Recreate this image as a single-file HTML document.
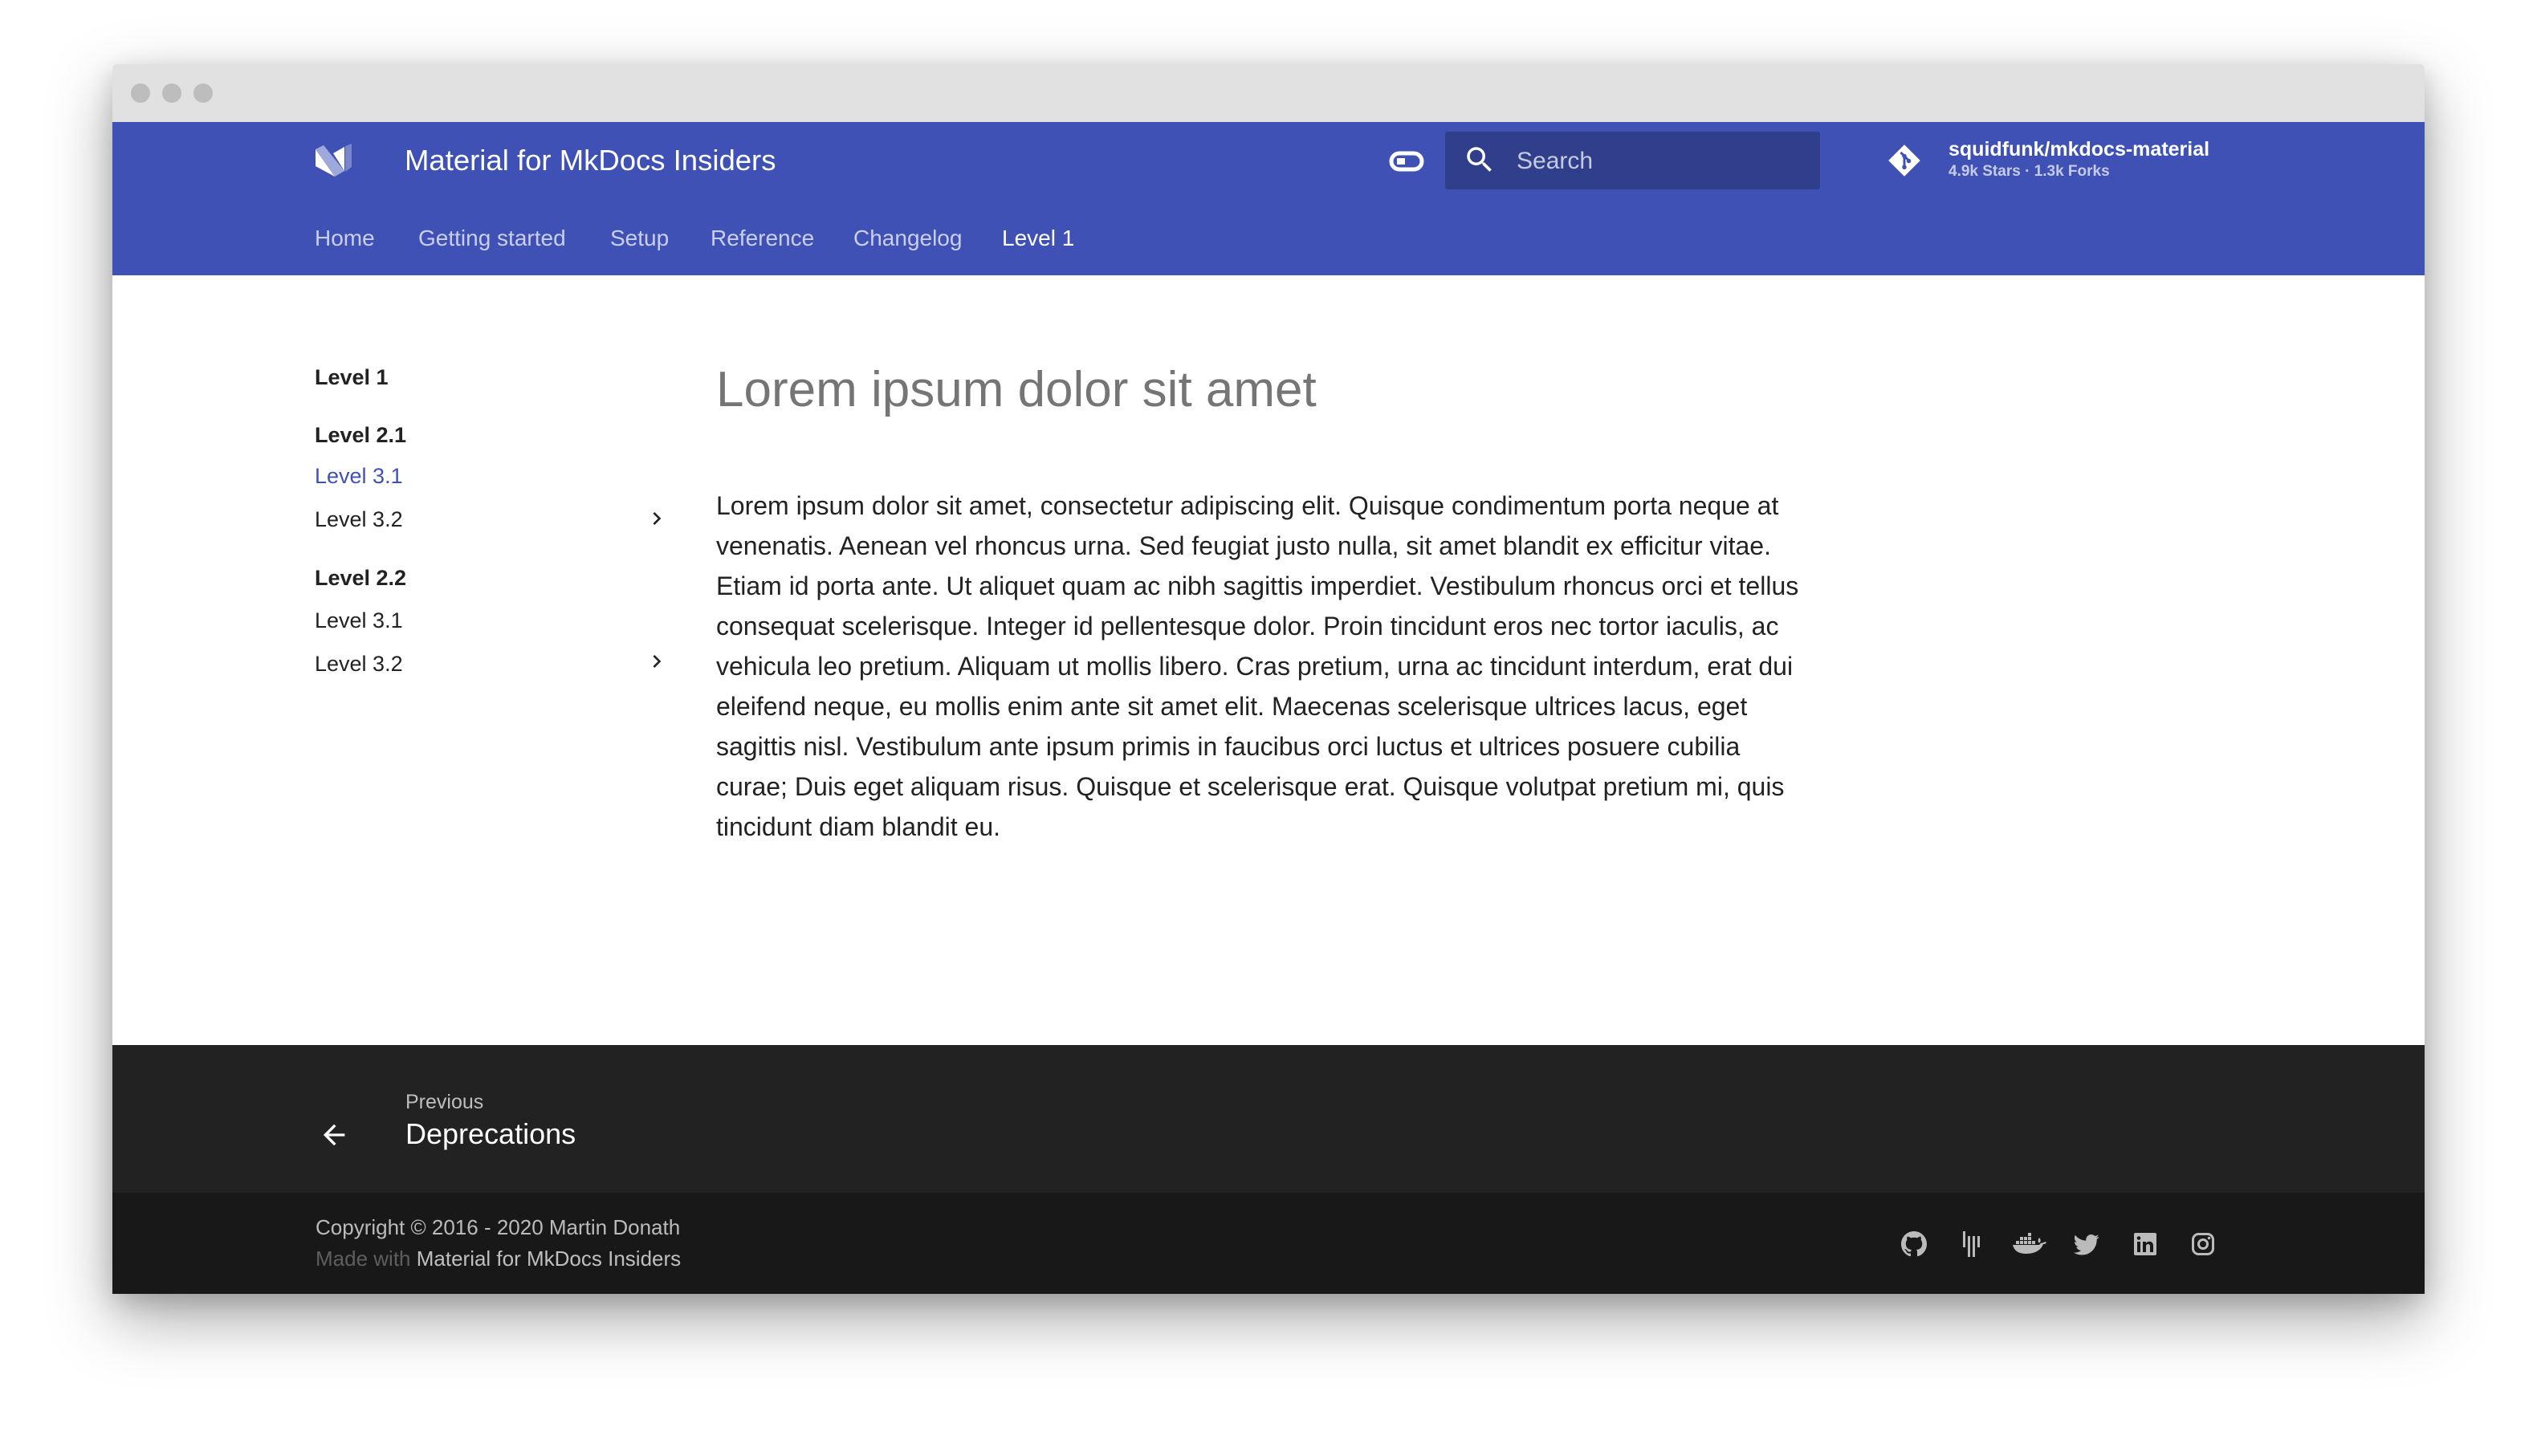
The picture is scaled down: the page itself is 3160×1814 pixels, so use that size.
<!DOCTYPE html>
<html><head><meta charset="utf-8"><style>
*{margin:0;padding:0;box-sizing:border-box}
body{width:3160px;height:1814px;background:#fff;position:relative;overflow:hidden;font-family:"Liberation Sans",Arial,sans-serif}
.a{position:absolute;white-space:nowrap;line-height:1}
#win{position:absolute;left:140px;top:80px;width:2880px;height:1532px;box-shadow:0 30px 80px rgba(0,0,0,.35),0 10px 30px rgba(0,0,0,.15);background:#fff;overflow:hidden;border-radius:6px 6px 0 0}
</style></head><body>
<div id="win"></div>
<div class="a" style="left:140px;top:80px;width:2880px;height:72px;background:#e1e1e1;border-radius:6px 6px 0 0"></div>
<div class="a" style="left:163px;top:104px;width:24px;height:24px;border-radius:50%;background:#bdbdbd"></div>
<div class="a" style="left:202px;top:104px;width:24px;height:24px;border-radius:50%;background:#bdbdbd"></div>
<div class="a" style="left:241px;top:104px;width:24px;height:24px;border-radius:50%;background:#bdbdbd"></div>
<div class="a" style="left:140px;top:152px;width:2880px;height:191px;background:#3f51b5"></div>
<svg class="a" style="left:380px;top:170px" width="80" height="70" viewBox="380 170 80 70">
<polygon points="393,186 393,207 417,220" fill="#fff"/>
<polygon points="415,191 429,183 429,213" fill="#fff"/>
<polygon points="393,186 403,181 429,213 417,220" fill="#9fa8da"/>
<polygon points="430,182 438,179 438,208 430,214" fill="#7986cb"/>
</svg>
<div class="a" style="left:504px;top:182px;font-size:36.5px;color:#fff">Material for MkDocs Insiders</div>
<div class="a" style="left:392px;top:283px;font-size:28px;color:rgba(255,255,255,.72)">Home</div>
<div class="a" style="left:521px;top:283px;font-size:28px;color:rgba(255,255,255,.72)">Getting started</div>
<div class="a" style="left:760px;top:283px;font-size:28px;color:rgba(255,255,255,.72)">Setup</div>
<div class="a" style="left:885px;top:283px;font-size:28px;color:rgba(255,255,255,.72)">Reference</div>
<div class="a" style="left:1063px;top:283px;font-size:28px;color:rgba(255,255,255,.72)">Changelog</div>
<div class="a" style="left:1248px;top:283px;font-size:28px;color:#fff">Level 1</div>
<svg class="a" style="left:1730px;top:188px" width="44" height="26" viewBox="0 0 44 26"><rect x="3" y="3" width="38" height="20" rx="10" fill="none" stroke="#fff" stroke-width="5"/><rect x="10" y="9" width="10" height="8" fill="#fff"/></svg>
<div class="a" style="left:1800px;top:164px;width:467px;height:72px;background:#303f8c;border-radius:3px"></div>
<svg class="a" style="left:1822px;top:178px" width="42" height="42" viewBox="0 0 24 24"><path fill="#fff" d="M9.5 3A6.5 6.5 0 0 1 16 9.5c0 1.61-.59 3.09-1.56 4.23l.27.27h.79l5 5-1.5 1.5-5-5v-.79l-.27-.27A6.516 6.516 0 0 1 9.5 16 6.5 6.5 0 0 1 3 9.5 6.5 6.5 0 0 1 9.5 3m0 2C7 5 5 7 5 9.5S7 14 9.5 14 14 12 14 9.5 12 5 9.5 5z"/></svg>
<div class="a" style="left:1889px;top:186px;font-size:30px;color:rgba(255,255,255,.72)">Search</div>
<svg class="a" style="left:2350px;top:178px" width="44" height="44" viewBox="0 0 24 24"><path fill="#fff" d="M12 1.2 22.8 12 12 22.8 1.2 12Z"/><path d="M9.5 6.5 12 9v8M12 9l3 3" stroke="#3f51b5" stroke-width="1.6" fill="none"/><circle cx="12" cy="9" r="1.5" fill="#3f51b5"/><circle cx="12" cy="16.5" r="1.5" fill="#3f51b5"/><circle cx="15" cy="12.3" r="1.5" fill="#3f51b5"/></svg>
<div class="a" style="left:2427px;top:174px;font-size:25px;font-weight:bold;color:#fff">squidfunk/mkdocs-material</div>
<div class="a" style="left:2427px;top:204px;font-size:19px;font-weight:bold;color:rgba(255,255,255,.7)">4.9k Stars · 1.3k Forks</div>

<div class="a" style="left:392px;top:457px;font-size:27px;font-weight:bold;color:#222">Level 1</div>
<div class="a" style="left:392px;top:529px;font-size:27px;font-weight:bold;color:#222">Level 2.1</div>
<div class="a" style="left:392px;top:580px;font-size:27px;color:#3f51b5">Level 3.1</div>
<div class="a" style="left:392px;top:634px;font-size:27px;color:#222">Level 3.2</div>
<div class="a" style="left:392px;top:707px;font-size:27px;font-weight:bold;color:#222">Level 2.2</div>
<div class="a" style="left:392px;top:760px;font-size:27px;color:#222">Level 3.1</div>
<div class="a" style="left:392px;top:814px;font-size:27px;color:#222">Level 3.2</div>
<svg class="a" style="left:802px;top:630px" width="32" height="32" viewBox="0 0 24 24"><path d="M8.6 16.6 13.2 12 8.6 7.4 10 6l6 6-6 6z" fill="#222"/></svg>
<svg class="a" style="left:802px;top:808px" width="32" height="32" viewBox="0 0 24 24"><path d="M8.6 16.6 13.2 12 8.6 7.4 10 6l6 6-6 6z" fill="#222"/></svg>

<div class="a" style="left:892px;top:455px;font-size:62px;color:#757575">Lorem ipsum dolor sit amet</div>
<div class="a" style="left:892px;top:605px;font-size:32px;line-height:50px;color:#222">Lorem ipsum dolor sit amet, consectetur adipiscing elit. Quisque condimentum porta neque at<br>venenatis. Aenean vel rhoncus urna. Sed feugiat justo nulla, sit amet blandit ex efficitur vitae.<br>Etiam id porta ante. Ut aliquet quam ac nibh sagittis imperdiet. Vestibulum rhoncus orci et tellus<br>consequat scelerisque. Integer id pellentesque dolor. Proin tincidunt eros nec tortor iaculis, ac<br>vehicula leo pretium. Aliquam ut mollis libero. Cras pretium, urna ac tincidunt interdum, erat dui<br>eleifend neque, eu mollis enim ante sit amet elit. Maecenas scelerisque ultrices lacus, eget<br>sagittis nisl. Vestibulum ante ipsum primis in faucibus orci luctus et ultrices posuere cubilia<br>curae; Duis eget aliquam risus. Quisque et scelerisque erat. Quisque volutpat pretium mi, quis<br>tincidunt diam blandit eu.</div>

<div class="a" style="left:140px;top:1302px;width:2880px;height:184px;background:#222"></div>
<div class="a" style="left:140px;top:1486px;width:2880px;height:126px;background:#181818"></div>
<svg class="a" style="left:394px;top:1394px" width="44" height="40" viewBox="0 0 24 24"><path fill="#fff" d="M20 11v2H8l5.5 5.5-1.42 1.42L4.16 12l7.92-7.92L13.5 5.5 8 11h12z"/></svg>
<div class="a" style="left:505px;top:1361px;font-size:25px;color:rgba(255,255,255,.7)">Previous</div>
<div class="a" style="left:505px;top:1395px;font-size:36px;color:#fff">Deprecations</div>
<div class="a" style="left:393px;top:1516px;font-size:26px;color:rgba(255,255,255,.7)">Copyright © 2016 - 2020 Martin Donath</div>
<div class="a" style="left:393px;top:1555px;font-size:26px;color:rgba(255,255,255,.3)">Made with <span style="color:rgba(255,255,255,.72)">Material for MkDocs Insiders</span></div>

<svg class="a" style="left:2368px;top:1534px" width="32" height="32" viewBox="0 0 16 16"><path fill="#bbb" d="M8 0C3.58 0 0 3.58 0 8c0 3.540 2.29 6.53 5.47 7.59.4.07.55-.17.55-.38 0-.19-.01-.82-.01-1.49-2.01.37-2.53-.49-2.690-.94-.09-.23-.48-.94-.82-1.13-.28-.15-.68-.52-.01-.53.63-.01 1.08.58 1.23.82.72 1.21 1.87.87 2.33.66.07-.52.28-.87.51-1.07-1.78-.2-3.64-.89-3.64-3.95 0-.87.31-1.59.82-2.15-.08-.2-.36-1.02.08-2.12 0 0 .67-.21 2.2.82.64-.18 1.32-.27 2-.27.68 0 1.36.09 2 .27 1.53-1.04 2.2-.82 2.2-.82.44 1.1.16 1.92.08 2.12.51.56.82 1.27.82 2.15 0 3.07-1.87 3.75-3.65 3.95.29.25.54.73.54 1.48 0 1.07-.01 1.93-.01 2.2 0 .21.15.46.55.38A8.013 8.013 0 0 0 16 8c0-4.42-3.58-8-8-8z"/></svg>
<svg class="a" style="left:2442px;top:1534px" width="28" height="32" viewBox="0 0 28 32"><rect x="3" y="0" width="3" height="20" fill="#bbb"/><rect x="9" y="6" width="3" height="26" fill="#bbb"/><rect x="15" y="6" width="3" height="26" fill="#bbb"/><rect x="21" y="6" width="3" height="14" fill="#bbb"/></svg>
<svg class="a" style="left:2507px;top:1535px" width="42" height="30" viewBox="0 0 42 30"><g fill="#bbb"><rect x="9" y="6" width="4" height="4"/><rect x="14" y="6" width="4" height="4"/><rect x="19" y="6" width="4" height="4"/><rect x="19" y="1" width="4" height="4"/><rect x="4" y="11" width="4" height="4"/><rect x="9" y="11" width="4" height="4"/><rect x="14" y="11" width="4" height="4"/><rect x="19" y="11" width="4" height="4"/><rect x="24" y="11" width="4" height="4"/><path d="M0 16h33c1-2 3-3 5-2.5 1-1.5 3-1.5 4-.5-1 2-3 2-4 2-3 8-11 12-21 12C8 27 2 24 0 16z"/><path d="M32 13c-1-2 0-5 1-6 2 2 2 4 1 6z"/></g></svg>
<svg class="a" style="left:2583px;top:1537px" width="32" height="28" viewBox="0 0 24 20"><path fill="#bbb" d="M23.6 2.4c-.9.4-1.8.6-2.8.8 1-.6 1.8-1.6 2.1-2.7-.9.6-2 1-3.1 1.2A4.9 4.9 0 0 0 11.5 6C7.4 5.8 3.8 3.9 1.4.9.9 1.700.7 2.500.7 3.4c0 1.7.9 3.2 2.2 4.1-.8 0-1.6-.2-2.2-.6 0 2.4 1.7 4.4 3.9 4.8-.7.2-1.5.2-2.2.1.6 2 2.4 3.4 4.6 3.4A9.9 9.9 0 0 1 0 17.2c2.2 1.4 4.8 2.2 7.5 2.2 9.1 0 14-7.5 14-14v-.6c1-.7 1.8-1.5 2.1-2.4z"/></svg>
<svg class="a" style="left:2658px;top:1536px" width="28" height="28" viewBox="0 0 28 28"><rect width="28" height="28" rx="2" fill="#bbb"/><rect x="4" y="11" width="4" height="13" fill="#181818"/><circle cx="6" cy="6.5" r="2.3" fill="#181818"/><path d="M11 11h4v2c1-1.5 2.5-2.3 4.3-2.3 3 0 4.7 1.8 4.7 5.3v8h-4v-7c0-2-.7-3-2.2-3S15 15 15 17v7h-4z" fill="#181818"/></svg>
<svg class="a" style="left:2730px;top:1536px" width="28" height="28" viewBox="0 0 28 28"><rect x="1.5" y="1.5" width="25" height="25" rx="7" fill="none" stroke="#bbb" stroke-width="3"/><circle cx="14" cy="14" r="5.5" fill="none" stroke="#bbb" stroke-width="3"/><circle cx="21.5" cy="6.5" r="1.7" fill="#bbb"/></svg>
</body></html>
